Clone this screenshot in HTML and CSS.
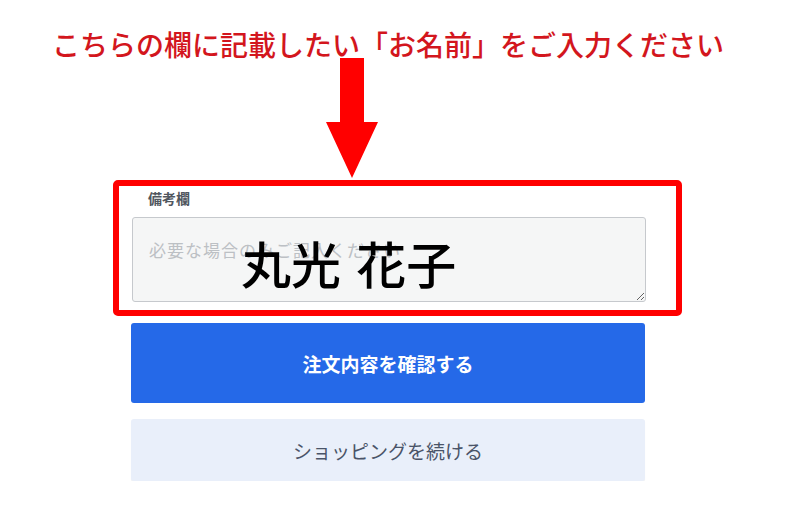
FILE: index.html
```html
<!DOCTYPE html>
<html lang="ja">
  <head>
    <meta charset="UTF-8" />
    <meta name="viewport" content="width=device-width, initial-scale=1.0" />
    <title>お名前の入力</title>
    <link rel="stylesheet" href="styles.css">
  </head>
  <body>
    <h1 class="note">こちらの欄に記載したい「お名前」をご入力ください</h1>
    <svg class="arrow" width="60" height="120" viewBox="0 0 60 120">
      <path d="M14 0 H38 V64 H52 L26 120 L0 64 H14 Z" fill="#f00" />
    </svg>
    <div class="form">
      <div class="highlight">
        <label class="label" for="memo">備考欄</label>
        <div class="field">
          <textarea id="memo" placeholder="必要な場合のみご記入ください"></textarea>
          <span class="sample">丸光&nbsp;花子</span>
        </div>
      </div>
      <button class="btn-primary">注文内容を確認する</button>
      <button class="btn-secondary">ショッピングを続ける</button>
    </div>
  </body>
</html>
```

FILE: styles.css
```css
body {
  margin: 0;
  background: #fff;
  font-family: "Noto Sans CJK JP", "Noto Sans", sans-serif;
}
.note {
  margin: 30px 0 0;
  padding-left: 52px;
  font-size: 28px;
  line-height: 28px;
  font-weight: 500;
  color: #d3161d;
  white-space: nowrap;
}
.arrow {
  display: block;
  margin-left: 326px;
}
.form {
  width: 514px;
  margin: 2px 0 0 131px;
}
.highlight {
  margin-left: -18px;
  width: 535px;
  padding: 3px 9px 8px 13px;
  border: 6px solid #f00;
  border-radius: 5px;
}
.label {
  display: block;
  padding-left: 16px;
  font-size: 14px;
  line-height: 18px;
  font-weight: bold;
  color: #50565e;
  margin-bottom: 10px;
}
.field {
  position: relative;
}
textarea {
  display: block;
  box-sizing: border-box;
  width: 514px;
  height: 85px;
  padding: 19px 16px;
  border: 1px solid #c6c9cd;
  border-radius: 3px;
  background: #f5f6f6;
  font-family: inherit;
  font-size: 17px;
  letter-spacing: 1px;
}
textarea::placeholder {
  color: #bcc0c4;
}
.sample {
  position: absolute;
  left: 109px;
  top: 20px;
  font-size: 50px;
  line-height: 50px;
  font-weight: 500;
  color: #000;
  word-spacing: 4px;
  pointer-events: none;
}
button {
  display: block;
  width: 514px;
  border: none;
  border-radius: 3px;
  font-family: inherit;
  cursor: pointer;
}
.btn-primary {
  margin-top: 7px;
  height: 80px;
  background: #2569e8;
  color: #fff;
  font-size: 19px;
  font-weight: bold;
}
.btn-secondary {
  margin-top: 16px;
  height: 62px;
  background: #e9effa;
  color: #4a5468;
  font-size: 19px;
  box-shadow: 0 1px 1px rgba(0, 0, 0, 0.06);
}
```
